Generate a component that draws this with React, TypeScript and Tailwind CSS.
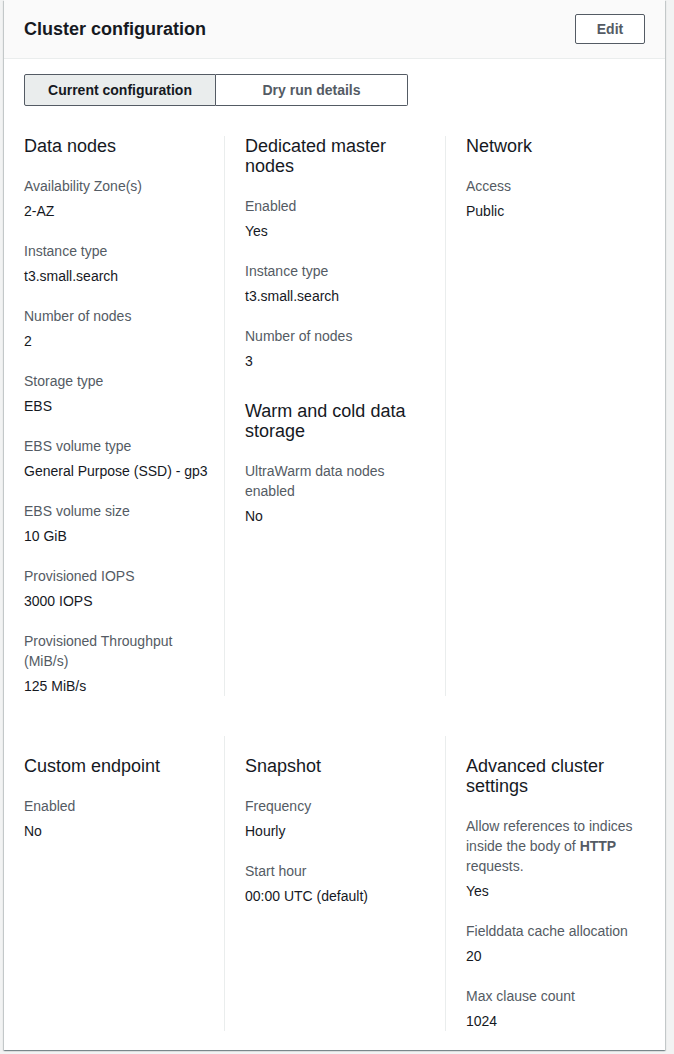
import React, { useState } from 'react';

type Field = { label: React.ReactNode; value: string };
type Section = { title: string; fields: Field[] };

const rowOne: Section[][] = [
  [
    {
      title: 'Data nodes',
      fields: [
        { label: 'Availability Zone(s)', value: '2-AZ' },
        { label: 'Instance type', value: 't3.small.search' },
        { label: 'Number of nodes', value: '2' },
        { label: 'Storage type', value: 'EBS' },
        { label: 'EBS volume type', value: 'General Purpose (SSD) - gp3' },
        { label: 'EBS volume size', value: '10 GiB' },
        { label: 'Provisioned IOPS', value: '3000 IOPS' },
        { label: 'Provisioned Throughput (MiB/s)', value: '125 MiB/s' },
      ],
    },
  ],
  [
    {
      title: 'Dedicated master nodes',
      fields: [
        { label: 'Enabled', value: 'Yes' },
        { label: 'Instance type', value: 't3.small.search' },
        { label: 'Number of nodes', value: '3' },
      ],
    },
    {
      title: 'Warm and cold data storage',
      fields: [{ label: 'UltraWarm data nodes enabled', value: 'No' }],
    },
  ],
  [
    {
      title: 'Network',
      fields: [{ label: 'Access', value: 'Public' }],
    },
  ],
];

const rowTwo: Section[][] = [
  [
    {
      title: 'Custom endpoint',
      fields: [{ label: 'Enabled', value: 'No' }],
    },
  ],
  [
    {
      title: 'Snapshot',
      fields: [
        { label: 'Frequency', value: 'Hourly' },
        { label: 'Start hour', value: '00:00 UTC (default)' },
      ],
    },
  ],
  [
    {
      title: 'Advanced cluster settings',
      fields: [
        {
          label: (
            <>
              Allow references to indices inside the body of <span className="font-bold">HTTP</span> requests.
            </>
          ),
          value: 'Yes',
        },
        { label: 'Fielddata cache allocation', value: '20' },
        { label: 'Max clause count', value: '1024' },
      ],
    },
  ],
];

function SectionBlock({ section, first }: { section: Section; first: boolean }) {
  return (
    <div className={first ? '' : 'mt-[30px]'}>
      <h3 className="text-[18px] leading-5 text-[#16191f]">{section.title}</h3>
      {section.fields.map((f, i) => (
        <div key={i} className="mt-5">
          <div className="text-sm leading-5 text-[#545b64]">{f.label}</div>
          <div className="mt-[5px] text-sm leading-5 text-[#16191f] whitespace-nowrap">{f.value}</div>
        </div>
      ))}
    </div>
  );
}

function ColumnRow({ columns, padTop }: { columns: Section[][]; padTop?: boolean }) {
  return (
    <div className="grid grid-cols-[200px_221px_1fr]">
      {columns.map((col, i) => (
        <div
          key={i}
          className={`pr-5 ${i > 0 ? 'border-l border-[#eaeded] pl-5' : ''} ${padTop ? 'pt-5' : ''}`}
        >
          {col.map((s, j) => (
            <SectionBlock key={s.title} section={s} first={j === 0} />
          ))}
        </div>
      ))}
    </div>
  );
}

export default function App() {
  const [tab, setTab] = useState<'current' | 'dry'>('current');

  return (
    <div className="min-h-screen bg-[#f2f3f3] font-['Liberation_Sans',Arial,sans-serif]">
      <div className="ml-1 w-[661px] bg-white shadow-[0_1px_1px_0_rgba(0,28,36,0.3),1px_1px_1px_0_rgba(0,28,36,0.15),-1px_1px_1px_0_rgba(0,28,36,0.15)]">
        {/* Header */}
        <div className="h-[59px] bg-[#fafafa] border-b border-[#eaeded] flex items-center justify-between px-5">
          <h2 className="text-[18px] font-bold leading-[22px] text-[#16191f]">Cluster configuration</h2>
          <button className="w-[70px] h-[30px] border border-[#545b64] rounded-[2px] bg-white text-sm font-bold text-[#545b64]">
            Edit
          </button>
        </div>

        <div className="pl-5 pt-[15px] pb-[19px]">
          {/* Segmented tabs */}
          <div className="flex">
            <button
              onClick={() => setTab('current')}
              className={`w-[192px] h-[32px] border border-[#545b64] rounded-l-[2px] text-sm font-bold ${
                tab === 'current' ? 'bg-[#eaeded] text-[#16191f]' : 'bg-white text-[#545b64]'
              }`}
            >
              Current configuration
            </button>
            <button
              onClick={() => setTab('dry')}
              className={`w-[192px] h-[32px] border border-l-0 border-[#545b64] rounded-r-[2px] text-sm font-bold ${
                tab === 'dry' ? 'bg-[#eaeded] text-[#16191f]' : 'bg-white text-[#545b64]'
              }`}
            >
              Dry run details
            </button>
          </div>

          <div className="mt-[30px]">
            <ColumnRow columns={rowOne} />
          </div>
          <div className="mt-10">
            <ColumnRow columns={rowTwo} padTop />
          </div>
        </div>
      </div>
    </div>
  );
}
